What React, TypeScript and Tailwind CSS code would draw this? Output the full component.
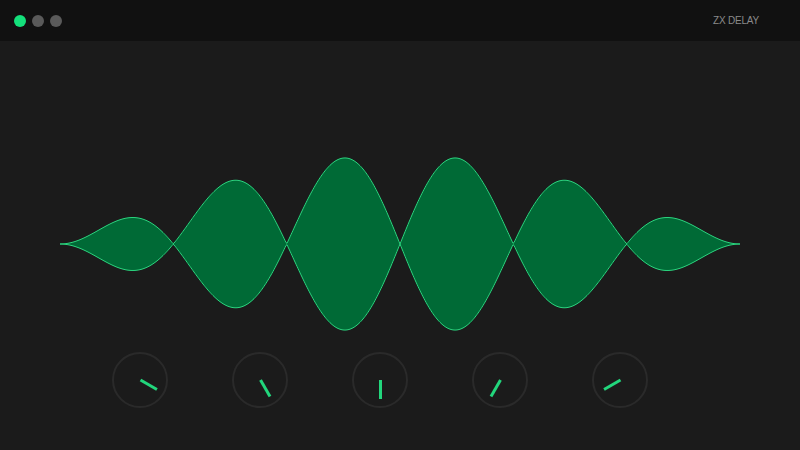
import React from "react";

function wavePath(): string {
  const W = 680;
  const H = 200;
  const mid = H / 2;
  const A = 89;
  const N = 680;
  const top: string[] = [];
  const bot: string[] = [];
  for (let i = 0; i <= N; i++) {
    const t = i / N;
    const v = A * Math.sin(Math.PI * t) * Math.abs(Math.sin(6 * Math.PI * t));
    const x = (t * W).toFixed(2);
    top.push(`${x},${(mid - v).toFixed(2)}`);
    bot.push(`${x},${(mid + v).toFixed(2)}`);
  }
  bot.reverse();
  return "M" + top.join(" L") + " L" + bot.join(" L") + " Z";
}

const angles = [120, 150, 180, 210, 240];

function Knob({ angle }: { angle: number }) {
  return (
    <div className="relative w-14 h-14 rounded-full border-2 border-[#2a2a2a]">
      <div
        className="absolute left-1/2 top-1/2 w-[3px] h-[19px] -ml-[1.5px] bg-[#22d67c] origin-top"
        style={{ transform: `rotate(${angle - 180}deg)` }}
      />
    </div>
  );
}

export default function App() {
  const d = wavePath();
  return (
    <div className="w-[800px] h-[450px] bg-[#1b1b1b] flex flex-col overflow-hidden" style={{ fontFamily: "'Liberation Sans', Arial, sans-serif" }}>
      <div className="h-[41px] bg-[#111111] flex items-center justify-between pl-[14px] pr-[41px]">
        <div className="flex gap-1.5">
          <div className="w-3 h-3 rounded-full bg-[#14e07b]" />
          <div className="w-3 h-3 rounded-full bg-[#5a5a5a]" />
          <div className="w-3 h-3 rounded-full bg-[#5a5a5a]" />
        </div>
        <div className="text-[10px] text-[#8a8a8a] tracking-[-0.2px]">ZX DELAY</div>
      </div>
      <div className="mt-[103px] pl-[60px]">
        <svg width="680" height="200" viewBox="0 0 680 200" className="block overflow-visible">
          <path d={d} fill="#006a36" stroke="#2bd57f" strokeWidth="1" strokeLinejoin="round" />
        </svg>
      </div>
      <div className="mt-2 ml-[112px] flex gap-16">
        {angles.map((a, i) => (
          <Knob key={i} angle={a} />
        ))}
      </div>
    </div>
  );
}
